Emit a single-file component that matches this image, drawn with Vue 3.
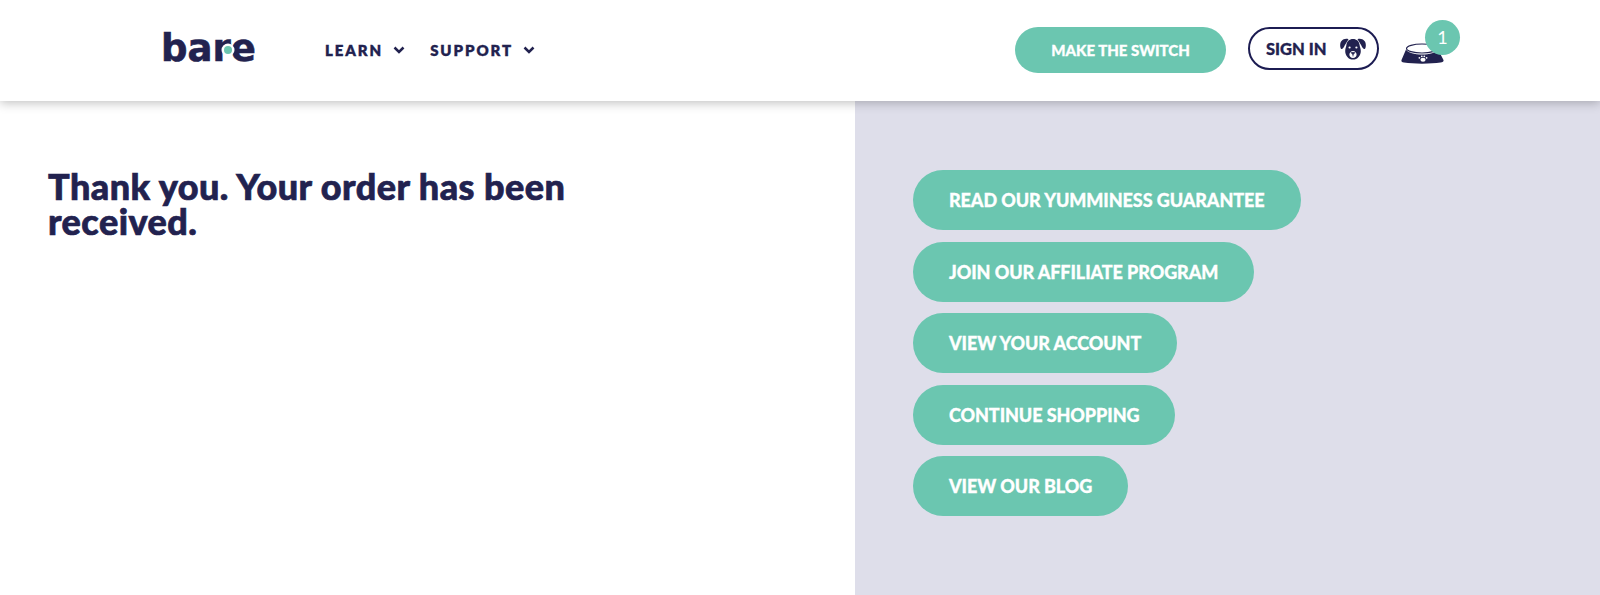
<template>
  <div class="page">
    <header class="site-header">
      <a class="logo" href="#">bar<span class="logo-e">e</span><span class="logo-dot"></span></a>

      <nav class="main-nav">
        <a v-for="item in navItems" :key="item" class="nav-link" href="#">
          {{ item }}
          <svg class="chevron" viewBox="0 0 12 8" width="12" height="8">
            <path d="M1.500 1.500 6 6l4.500-4.500" fill="none" stroke="#22224f" stroke-width="2.500" />
          </svg>
        </a>
      </nav>

      <div class="header-actions">
        <a class="switch-btn" href="#">MAKE THE SWITCH</a>
        <a class="signin-btn" href="#">
          SIGN IN
          <svg class="dog" viewBox="0 0 26 22" width="26" height="22">
            <path d="M8.500 1.200C6 .4 3.200 1 1.500 3 .2 4.600-.2 7 .5 9.800c.3 1.300 1.400 1.700 2.300.8.900-1 1.500-2.200 2-3.400L8.500 1.200Z" fill="#22224f" />
            <path d="M17.500 1.200c2.500-.8 5.300-.2 7 1.800 1.300 1.600 1.700 4 1 6.800-.3 1.300-1.400 1.700-2.300.8-.9-1-1.500-2.200-2-3.400l-3.700-6Z" fill="#22224f" />
            <path d="M13 1c3.600 0 6.200 2.200 6.600 6 .2 2 1.200 3.400 1.200 6 0 4.800-3.400 8.600-7.800 8.600s-7.800-3.800-7.800-8.600c0-2.600 1-4 1.200-6C6.800 3.200 9.400 1 13 1Z" fill="#22224f" />
            <circle cx="9.600" cy="9.500" r="1.100" fill="#fff" />
            <circle cx="16.400" cy="9.500" r="1.100" fill="#fff" />
            <path d="M13 13c-2 0-3.600 1.800-3.600 3.800 0 2 1.600 3.200 3.600 3.200s3.600-1.200 3.600-3.200c0-2-1.600-3.800-3.600-3.800Z" fill="#fff" />
            <path d="M11.200 14.600h3.600L13 16.800l-1.800-2.200Zm1.800 2.200v1.600" fill="#22224f" stroke="#22224f" stroke-width=".8" />
          </svg>
        </a>
        <a class="cart" href="#">
          <svg class="bowl" viewBox="0 0 44 21" width="44" height="21">
            <ellipse cx="21" cy="5.500" rx="15.500" ry="4.500" fill="#fff" stroke="#22224f" stroke-width="1.200" />
            <path d="M5 6.500c2 3.500 8.500 5 16 5s14-1.500 16-5l5.500 10.500c.5 1.500-1 2.300-3 2.600-5 .7-11 1.100-18.500 1.100-7 0-13-.4-18-1.100-2-.3-3-1.100-2.500-2.600L5 6.500Z" fill="#22224f" />
            <g fill="#fff">
              <ellipse cx="22" cy="16.800" rx="2.600" ry="2" />
              <circle cx="18.400" cy="14.800" r=".9" />
              <circle cx="20.800" cy="13.300" r=".9" />
              <circle cx="23.300" cy="13.300" r=".9" />
              <circle cx="25.600" cy="14.800" r=".9" />
            </g>
          </svg>
          <span class="cart-count">1</span>
        </a>
      </div>
    </header>

    <main class="order-main">
      <section class="order-left">
        <h1>Thank you. Your order has been received.</h1>
      </section>
      <section class="order-right">
        <a v-for="link in links" :key="link" class="pill" href="#">{{ link }}</a>
      </section>
    </main>
  </div>
</template>

<script setup>
const navItems = ['LEARN', 'SUPPORT']

const links = [
  'READ OUR YUMMINESS GUARANTEE',
  'JOIN OUR AFFILIATE PROGRAM',
  'VIEW YOUR ACCOUNT',
  'CONTINUE SHOPPING',
  'VIEW OUR BLOG'
]
</script>

<style>
html, body {
  margin: 0;
  background: #fff;
}
</style>

<style scoped>
.page {
  height: 595px;
  display: flex;
  flex-direction: column;
  overflow: hidden;
  font-family: "Lato", "Liberation Sans", sans-serif;
  color: #22224f;
}

a {
  text-decoration: none;
}

.site-header {
  position: relative;
  z-index: 2;
  height: 101px;
  flex: none;
  display: flex;
  align-items: center;
  padding: 0 155px 0 161px;
  box-sizing: border-box;
  background: #fff;
  box-shadow: 0 2px 10px rgba(0, 0, 0, 0.25);
}

.logo {
  position: relative;
  display: block;
  width: 96px;
  margin-top: -4px;
  font-family: "DejaVu Sans", sans-serif;
  font-size: 37px;
  line-height: 41px;
  font-weight: 700;
  letter-spacing: 0;
  color: #22224f;
  -webkit-text-stroke: 0.6px #22224f;
}

.logo-dot {
  position: absolute;
  top: 18px;
  left: 63px;
  width: 8px;
  height: 8px;
  border-radius: 50%;
  background: #6bc6b0;
  box-shadow: 0 0 0 2.500px #fff;
}

.main-nav {
  display: flex;
  gap: 25px;
  margin-left: 68px;
  margin-top: -2px;
}

.nav-link {
  display: flex;
  align-items: center;
  gap: 10px;
  font-size: 15px;
  font-weight: 800;
  letter-spacing: 1.900px;
  color: #22224f;
  -webkit-text-stroke: 0.3px #22224f;
}

.chevron {
  margin-top: 1px;
}

.header-actions {
  margin-left: auto;
  align-self: flex-start;
  margin-top: 27px;
  display: flex;
  align-items: flex-start;
}

.switch-btn {
  width: 211px;
  height: 46px;
  display: flex;
  align-items: center;
  justify-content: center;
  border-radius: 23px;
  background: #6bc6b0;
  color: #fff;
  font-size: 15px;
  font-weight: 900;
  -webkit-text-stroke: 0.3px #fff;
}

.signin-btn {
  width: 131px;
  height: 43px;
  margin-left: 22px;
  padding: 0 11px 0 16px;
  box-sizing: border-box;
  display: flex;
  align-items: center;
  justify-content: space-between;
  border: 2px solid #1c1c52;
  border-radius: 22px;
  color: #22224f;
  font-size: 16.500px;
  font-weight: 900;
  -webkit-text-stroke: 0.3px #22224f;
}

.cart {
  position: relative;
  display: block;
  width: 44px;
  height: 21px;
  margin-left: 22px;
  margin-top: 16px;
}

.bowl {
  display: block;
}

.cart-count {
  position: absolute;
  top: -23px;
  left: 24px;
  width: 35px;
  height: 35px;
  border-radius: 50%;
  background: #6bc6b0;
  color: #fff;
  font-size: 18px;
  line-height: 35px;
  text-align: center;
}

.order-main {
  flex: 1;
  display: grid;
  grid-template-columns: 855px 1fr;
}

.order-left {
  padding: 68px 0 0 48px;
}

h1 {
  max-width: 540px;
  margin: 0;
  font-size: 36px;
  line-height: 35px;
  font-weight: 900;
  letter-spacing: 0.46px;
  color: #22224f;
  -webkit-text-stroke: 0.7px #22224f;
}

.order-right {
  background: #dedeea;
  padding: 69px 0 0 58px;
  display: flex;
  flex-direction: column;
  align-items: flex-start;
  gap: 11.500px;
}

.pill {
  height: 60px;
  padding: 0 36px;
  display: flex;
  align-items: center;
  border-radius: 30px;
  background: #6bc6b0;
  color: #fff;
  font-size: 18px;
  font-weight: 900;
  letter-spacing: -0.08px;
  -webkit-text-stroke: 0.3px #fff;
}
</style>
